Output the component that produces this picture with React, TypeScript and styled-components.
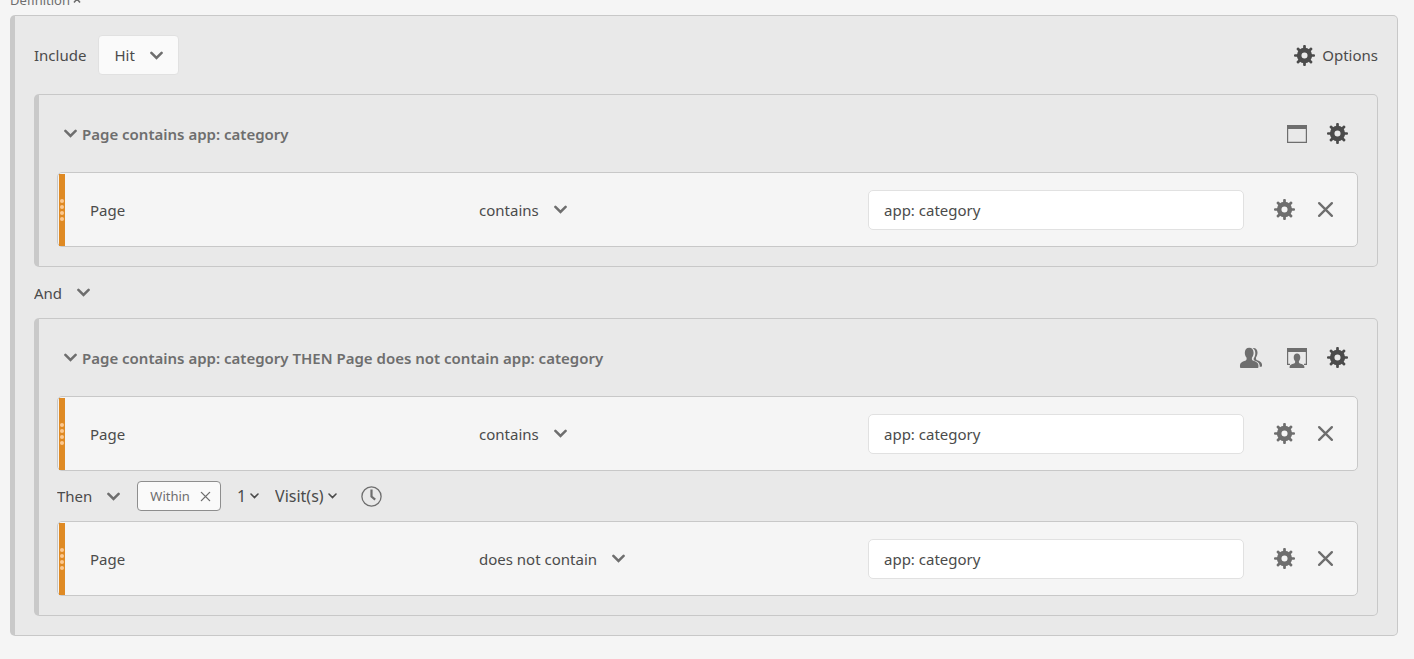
import React, { useId } from 'react';
import styled, { createGlobalStyle, css } from 'styled-components';

const color = {
  page: '#f5f5f5',
  panel: '#e9e9e9',
  card: '#f5f5f5',
  border: '#c8c8c8',
  edge: '#c9c9c9',
  field: '#e1e1e1',
  text: '#4b4b4b',
  muted: '#6e6e6e',
  orange: '#df8a24',
};

const GlobalStyle = createGlobalStyle`
  *, *::before, *::after { box-sizing: border-box; }
  body {
    margin: 0;
    background: ${color.page};
    color: ${color.text};
    font-family: "Noto Sans", "Open Sans", sans-serif;
    font-size: 15px;
    line-height: 20px;
  }
  button, input, select { font: inherit; color: inherit; }
  svg { display: block; flex: none; }
`;

/* ---------- icons ---------- */

const TEETH = [0, 45, 90, 135, 180, 225, 270, 315];

const GearIcon = () => (
  <svg width="21" height="21" viewBox="0 0 20 20" fill="currentColor" aria-hidden="true">
    {TEETH.map((angle) => (
      <rect key={angle} x="8.7" y="0" width="2.6" height="5" rx="1" transform={`rotate(${angle} 10 10)`} />
    ))}
    <path
      fillRule="evenodd"
      d="M10 2.700a7.300 7.300 0 1 0 0 14.600a7.300 7.300 0 1 0 0-14.600ZM10 7.100a2.900 2.900 0 1 1 0 5.800a2.900 2.900 0 1 1 0-5.800Z"
    />
  </svg>
);

const ChevronIcon = () => (
  <svg width="13" height="9" viewBox="0 0 13 9" fill="none" stroke="currentColor" strokeWidth="2.5" strokeLinecap="round" aria-hidden="true">
    <path d="M1.4 1.9 6.5 7 11.6 1.9" />
  </svg>
);

const SmallChevronIcon = () => (
  <svg width="9" height="6" viewBox="0 0 9 6" fill="none" stroke="currentColor" strokeWidth="1.6" strokeLinecap="round" aria-hidden="true">
    <path d="M1 1 4.5 4.5 8 1" />
  </svg>
);

const CloseIcon = ({ size, weight }: { size: number; weight: number }) => (
  <svg width={size} height={size} viewBox="0 0 16 16" fill="none" stroke="currentColor" strokeWidth={weight} strokeLinecap="round" aria-hidden="true">
    <path d="M2 2 14 14M14 2 2 14" />
  </svg>
);

const HitIcon = () => (
  <svg width="20" height="20" viewBox="0 0 20 20" aria-hidden="true">
    <path d="M0.6 1.600h18.800v16.800h-18.800z" fill="none" stroke="currentColor" strokeWidth="1.200" />
    <path d="M0 1h20v4H0z" fill="currentColor" />
  </svg>
);

const VisitIcon = () => (
  <svg width="20" height="22" viewBox="0 0 20 22" fill="currentColor" aria-hidden="true">
    <path d="M0 1h20v4H0z" />
    <path d="M0.600 4v13.400H3M19.400 4v13.400H17" fill="none" stroke="currentColor" strokeWidth="1.200" />
    <path d="M10 6.500c2 0 3.300 1.400 3.300 3.700 0 1.700-.6 3-1.400 3.900v1.200c0 .5.400.9 1 1.100 2.700.8 4.300 1.400 4.500 3.300 0 .7.100 1.300-.6 1.300H3.200c-.7 0-.6-.6-.6-1.300.2-1.900 1.800-2.500 4.500-3.300.6-.2 1-.6 1-1.100v-1.200c-.8-.9-1.400-2.200-1.400-3.900 0-2.300 1.300-3.700 3.300-3.700Z" />
  </svg>
);

const VisitorIcon = () => (
  <svg width="28" height="22" viewBox="0 0 28 22" fill="currentColor" aria-hidden="true">
    <path d="M10.200.8c2.700 0 4.400 1.900 4.400 5 0 2-.7 3.700-1.700 4.900v1.300c0 .9.500 1.400 1.500 1.700 3.200.9 4.700 2 5 4.400 0 2.100.3 2.900-.7 2.900H1.800c-1 0-.8-.8-.8-2.900.3-2.400 1.900-3.500 5.100-4.400 1-.3 1.500-.8 1.500-1.700v-1.300C6.500 9.500 5.800 7.800 5.800 5.800c0-3.100 1.700-5 4.400-5Z" />
    <path d="M13.600 1c3-.4 4.900 1.400 4.900 4.600 0 2.100-.7 3.800-1.500 4.900v1.300c0 .7.400 1.100 1.300 1.400 2.900.9 4.400 2 4.700 4.400 0 1.500.1 2.200-.7 2.200h-1.600v-1.300c-.3-2.700-2-3.900-4.800-4.800-.8-.3-1.200-.6-1.200-1.300v-1.100c1-1.300 1.600-3 1.600-5.200 0-2.200-.9-4.100-2.700-5.100Z" />
  </svg>
);

const ClockIcon = () => (
  <svg width="21" height="21" viewBox="0 0 21 21" fill="none" stroke="currentColor" aria-hidden="true">
    <circle cx="10.500" cy="10.500" r="9.600" strokeWidth="1.300" />
    <path d="M10.500 3.500v7l3.700 3.200" strokeWidth="2.200" />
  </svg>
);

const SortIcon = () => (
  <svg width="8" height="8" viewBox="0 0 8 8" fill="none" stroke="currentColor" strokeWidth="1.600" aria-hidden="true">
    <path d="M1 6.500 4 3 7 6.500" />
  </svg>
);

/* ---------- controls ---------- */

const SelectBox = styled.span<{ $compact?: boolean }>`
  position: relative;
  display: inline-flex;
  align-items: center;
  justify-self: start;
  color: ${({ $compact }) => ($compact ? color.text : color.muted)};

  svg {
    position: absolute;
    right: 0;
    pointer-events: none;
  }
`;

const PlainSelect = styled.select<{ $compact?: boolean }>`
  appearance: none;
  field-sizing: content;
  margin: 0;
  padding: 0 ${({ $compact }) => ($compact ? 13 : 28)}px 0 0;
  border: 0;
  background: transparent;
  color: ${color.text};
  font-size: ${({ $compact }) => ($compact ? 16 : 15)}px;
  line-height: 20px;
  cursor: pointer;
`;

const ScopeBox = styled(SelectBox)`
  svg { right: 16px; }
`;

const ScopeSelect = styled(PlainSelect)`
  height: 40px;
  padding: 0 43px 0 15px;
  border: 1px solid ${color.field};
  border-radius: 4px;
  background: #fafafa;
`;

const IconButton = styled.button<{ $strong?: boolean }>`
  display: inline-flex;
  align-items: center;
  justify-content: center;
  padding: 0;
  border: 0;
  background: transparent;
  color: ${({ $strong }) => ($strong ? color.text : color.muted)};
  cursor: pointer;
`;

const ContextIcon = styled.span`
  display: inline-flex;
  color: ${color.muted};
`;

type DropdownProps = { label: string; options: string[]; value: string; compact?: boolean };

const Dropdown = ({ label, options, value, compact }: DropdownProps) => (
  <SelectBox $compact={compact}>
    <PlainSelect $compact={compact} aria-label={label} defaultValue={value}>
      {options.map((option) => (
        <option key={option}>{option}</option>
      ))}
    </PlainSelect>
    {compact ? <SmallChevronIcon /> : <ChevronIcon />}
  </SelectBox>
);

/* ---------- layout ---------- */

const Page = styled.main`
  padding: 0 16px 23px 10px;
`;

const TitleBar = styled.header`
  display: flex;
  align-items: flex-end;
  height: 15px;
  padding-bottom: 7px;
`;

const Title = styled.h2`
  display: flex;
  align-items: center;
  gap: 3px;
  margin: 0;
  color: ${color.muted};
  font-size: 13px;
  font-weight: 400;
  line-height: 16px;
`;

const framed = css`
  border: 1px solid ${color.border};
  border-left: 5px solid ${color.edge};
  border-radius: 5px;
  background: ${color.panel};
`;

const Panel = styled.section`
  ${framed}
  padding: 19px;
`;

const Group = styled.section`
  ${framed}
  padding: 0 19px 19px 18px;
`;

const ScopeRow = styled.div`
  display: flex;
  align-items: center;
  justify-content: space-between;
  margin-bottom: 19px;
`;

const ScopeLabel = styled.label`
  display: flex;
  align-items: center;
  gap: 12px;
`;

const OptionsButton = styled(IconButton)`
  gap: 7px;
`;

const GroupHeader = styled.div`
  display: flex;
  align-items: center;
  justify-content: space-between;
  height: 77px;
  padding: 0 10px 0 7px;
`;

const GroupToggle = styled(IconButton)`
  gap: 5px;
  font-weight: 600;
`;

const GroupTools = styled.div`
  display: flex;
  align-items: center;
  gap: 20px;
`;

const Connector = styled.div<{ $height: number }>`
  display: flex;
  align-items: center;
  height: ${({ $height }) => $height}px;
`;

const Card = styled.article`
  display: grid;
  grid-template-columns: 32px repeat(3, 1fr) 100px;
  align-items: center;
  height: 75px;
  border: 1px solid ${color.border};
  border-radius: 5px;
  background: ${color.card};
`;

const DragHandle = styled.span`
  display: flex;
  flex-direction: column;
  align-items: center;
  justify-content: center;
  gap: 2px;
  align-self: stretch;
  width: 6px;
  margin: 1px 0 0 1px;
  background: ${color.orange};
  cursor: grab;
`;

const Grip = styled.i`
  width: 4px;
  height: 4px;
  border-radius: 50%;
  background: #fcc890;
`;

const ValueInput = styled.input`
  height: 40px;
  min-width: 0;
  margin-right: 13px;
  padding: 0 15px;
  border: 1px solid ${color.field};
  border-radius: 5px;
  background: #fff;
  outline: none;
`;

const CardTools = styled.div`
  display: flex;
  align-items: center;
  gap: 20px;
  padding-left: 17px;
`;

const RemoveButton = styled(IconButton)`
  width: 20px;
  height: 20px;
`;

const Chip = styled.span`
  display: inline-flex;
  align-items: center;
  gap: 10px;
  height: 30px;
  margin: 0 16px 0 17px;
  padding: 0 9px 0 12px;
  border: 1px solid #8e8e8e;
  border-radius: 4px;
  background: #fafafa;
  color: ${color.muted};
  font-size: 13px;
`;

const Duration = styled.div`
  display: flex;
  align-items: center;
  gap: 16px;
  margin-right: 24px;
`;

/* ---------- segment parts ---------- */

const OPERATORS = ['contains', 'does not contain', 'equals', 'does not equal'];

const Rule = ({ name, operator, value }: { name: string; operator: string; value: string }) => {
  const id = useId();
  return (
    <Card>
      <DragHandle aria-hidden="true">
        <Grip />
        <Grip />
        <Grip />
        <Grip />
      </DragHandle>
      <label htmlFor={id}>{name}</label>
      <Dropdown label="Operator" options={OPERATORS} value={operator} />
      <ValueInput id={id} type="text" defaultValue={value} />
      <CardTools>
        <IconButton type="button" aria-label="Rule settings"><GearIcon /></IconButton>
        <RemoveButton type="button" aria-label="Remove rule"><CloseIcon size={17} weight={2.2} /></RemoveButton>
      </CardTools>
    </Card>
  );
};

type ContainerProps = { title: string; tools: React.ReactNode; children: React.ReactNode };

const Container = ({ title, tools, children }: ContainerProps) => (
  <Group>
    <GroupHeader>
      <GroupToggle type="button" aria-expanded="true">
        <ChevronIcon />
        {title}
      </GroupToggle>
      <GroupTools>
        {tools}
        <IconButton type="button" $strong aria-label="Container settings"><GearIcon /></IconButton>
      </GroupTools>
    </GroupHeader>
    {children}
  </Group>
);

export default function App() {
  return (
    <>
      <GlobalStyle />
      <Page>
        <TitleBar>
          <Title>Definition <SortIcon /></Title>
        </TitleBar>
        <Panel>
          <ScopeRow>
            <ScopeLabel>
              Include
              <ScopeBox>
                <ScopeSelect defaultValue="Hit">
                  <option>Hit</option>
                  <option>Visit</option>
                  <option>Visitor</option>
                </ScopeSelect>
                <ChevronIcon />
              </ScopeBox>
            </ScopeLabel>
            <OptionsButton type="button" $strong>
              <GearIcon />
              Options
            </OptionsButton>
          </ScopeRow>

          <Container title="Page contains app: category" tools={<ContextIcon><HitIcon /></ContextIcon>}>
            <Rule name="Page" operator="contains" value="app: category" />
          </Container>

          <Connector $height={51}>
            <Dropdown label="Container operator" options={['And', 'Or', 'Then']} value="And" />
          </Connector>

          <Container
            title="Page contains app: category THEN Page does not contain app: category"
            tools={
              <>
                <ContextIcon><VisitorIcon /></ContextIcon>
                <ContextIcon><VisitIcon /></ContextIcon>
              </>
            }
          >
            <Rule name="Page" operator="contains" value="app: category" />
            <Connector $height={50}>
              <Dropdown label="Rule operator" options={['And', 'Or', 'Then']} value="Then" />
              <Chip>
                Within
                <IconButton type="button" aria-label="Remove within"><CloseIcon size={11} weight={2} /></IconButton>
              </Chip>
              <Duration>
                <Dropdown compact label="Count" options={['1', '2', '3']} value="1" />
                <Dropdown compact label="Unit" options={['Hit(s)', 'Visit(s)', 'Day(s)']} value="Visit(s)" />
              </Duration>
              <IconButton type="button" aria-label="Add time restriction"><ClockIcon /></IconButton>
            </Connector>
            <Rule name="Page" operator="does not contain" value="app: category" />
          </Container>
        </Panel>
      </Page>
    </>
  );
}
